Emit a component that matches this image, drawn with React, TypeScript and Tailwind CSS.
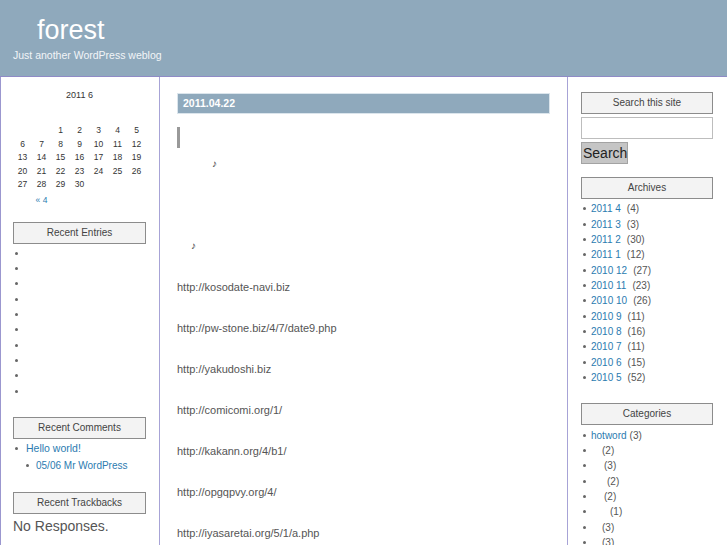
import type { ReactNode } from "react";

const archives: [string, number][] = [
  ["2011 4", 4],
  ["2011 3", 3],
  ["2011 2", 30],
  ["2011 1", 12],
  ["2010 12", 27],
  ["2010 11", 23],
  ["2010 10", 26],
  ["2010 9", 11],
  ["2010 8", 16],
  ["2010 7", 11],
  ["2010 6", 15],
  ["2010 5", 52],
];

// category names are blank in the shot, only the gap before the count is left
const categories: { name?: string; gap: string; count: number }[] = [
  { name: "hotword", gap: "w-[3px]", count: 3 },
  { gap: "w-[11px]", count: 2 },
  { gap: "w-[13px]", count: 3 },
  { gap: "w-[16px]", count: 2 },
  { gap: "w-[13px]", count: 2 },
  { gap: "w-[19px]", count: 1 },
  { gap: "w-[11px]", count: 3 },
  { gap: "w-[11px]", count: 3 },
];

const links = [
  "http://kosodate-navi.biz",
  "http://pw-stone.biz/4/7/date9.php",
  "http://yakudoshi.biz",
  "http://comicomi.org/1/",
  "http://kakann.org/4/b1/",
  "http://opgqpvy.org/4/",
  "http://iyasaretai.org/5/1/a.php",
];

const weeks: (number | null)[][] = [
  [null, null, 1, 2, 3, 4, 5],
  [6, 7, 8, 9, 10, 11, 12],
  [13, 14, 15, 16, 17, 18, 19],
  [20, 21, 22, 23, 24, 25, 26],
  [27, 28, 29, 30, null, null, null],
];

function WidgetTitle({ children, className = "" }: { children: ReactNode; className?: string }) {
  return (
    <div
      className={`h-[22px] w-[133px] border border-[#8c8c8c] bg-[#f3f3f3] text-center text-[10px] leading-[20px] text-[#444] ${className}`}
    >
      {children}
    </div>
  );
}

function Dot() {
  return <span className="h-[3px] w-[3px] shrink-0 rounded-full bg-[#666]" />;
}

export default function App() {
  return (
    <div className="min-h-[545px] bg-white font-['Liberation_Sans',Arial,sans-serif] text-[#555]">
      <header className="h-[77px] border-b border-[#8f8bc6] bg-[#8fa9bc] pt-[15px]">
        <h1 className="pl-[37px] text-[27px] leading-[30px] text-white">forest</h1>
        <p className="mt-[3px] pl-[13px] text-[10.5px] leading-[14px] text-[#f2f5f8]">
          Just another WordPress weblog
        </p>
      </header>

      <div className="flex min-h-[468px] border-l border-[#9b97cf]">
        {/* left sidebar */}
        <aside className="w-[159px] shrink-0 border-r border-[#a7a3d6] pl-[12px]">
          <div className="mt-[11px] w-[133px] text-center text-[9px] leading-[14px] text-[#333]">
            2011 6
          </div>
          <div className="h-[22px]" />
          <div className="w-[133px]">
            {weeks.map((week, i) => (
              <div key={i} className="grid grid-cols-7 text-center text-[8.5px] leading-[13.5px] text-[#333]">
                {week.map((d, j) => (
                  <span key={j}>{d ?? ""}</span>
                ))}
              </div>
            ))}
            <div className="mt-[2.5px] grid grid-cols-7 text-center text-[8.5px] leading-[13.5px]">
              <span />
              <span className="text-[#2b7bb0]">« 4</span>
            </div>
          </div>

          <WidgetTitle className="mt-[14px]">Recent Entries</WidgetTitle>
          <ul className="mt-[2px]">
            {Array.from({ length: 10 }).map((_, i) => (
              <li key={i} className="flex h-[15.33px] items-center pl-[2px]">
                <Dot />
              </li>
            ))}
          </ul>

          <WidgetTitle className="mt-[18px]">Recent Comments</WidgetTitle>
          <ul className="mt-[2.5px] text-[#2b7bb0]">
            <li className="flex h-[15px] items-center pl-[2px]">
              <Dot />
              <span className="ml-[8px] text-[10.5px]">Hello world!</span>
            </li>
            <li className="mt-[2px] flex h-[15px] items-center pl-[13px]">
              <Dot />
              <span className="ml-[7px] text-[10px]">05/06 Mr WordPress</span>
            </li>
          </ul>

          <WidgetTitle className="mt-[19px]">Recent Trackbacks</WidgetTitle>
          <p className="mt-[3px] text-[14px] leading-[18px] text-[#555]">No Responses.</p>
        </aside>

        {/* main column */}
        <main className="w-[408px] shrink-0 border-r border-[#a7a3d6] px-[17px]">
          <div className="mt-[16px] h-[21px] border border-[#dbe5ec] bg-[#8fa9bc] pl-[5px] text-[10.5px] font-bold leading-[19px] text-white">
            2011.04.22
          </div>
          <div className="mt-[13px] h-[21px] border-l-[3px] border-[#999]" />
          <p className="mt-[9px] pl-[35px] text-[10px] leading-[14px] text-[#333]">♪</p>
          <p className="mt-[68px] pl-[14px] text-[10px] leading-[14px] text-[#333]">♪</p>
          {links.map((href) => (
            <p key={href} className="mt-[27px] text-[11px] leading-[14px] text-[#555]">
              {href}
            </p>
          ))}
        </main>

        {/* right sidebar */}
        <aside className="flex-1 pl-[13px]">
          <WidgetTitle className="mt-[15px] !w-[132px]">Search this site</WidgetTitle>
          <input
            type="text"
            className="mt-[3px] block h-[22px] w-[132px] border border-[#bdbdbd] bg-white outline-none"
          />
          <button
            type="button"
            className="mt-[3px] block h-[22px] w-[47px] border border-[#a3a3a3] bg-[#c5c5c5] pl-[1px] text-left text-[14px] leading-[20px] text-[#222]"
          >
            Search
          </button>

          <WidgetTitle className="mt-[13px] !w-[132px]">Archives</WidgetTitle>
          <ul className="mt-[2.3px] text-[10px]">
            {archives.map(([label, count]) => (
              <li key={label} className="flex h-[15.33px] items-center pl-[2px]">
                <Dot />
                <span className="ml-[5px] text-[#2b7bb0]">{label}</span>
                <span className="ml-[6px] text-[#555]">({count})</span>
              </li>
            ))}
          </ul>

          <WidgetTitle className="mt-[18px] !w-[132px]">Categories</WidgetTitle>
          <ul className="mt-[2.3px] text-[10px]">
            {categories.map((c, i) => (
              <li key={i} className="flex h-[15.33px] items-center pl-[2px]">
                <Dot />
                <span className="ml-[5px] text-[#2b7bb0]">{c.name ?? ""}</span>
                <span className={`inline-block ${c.gap}`} />
                <span className="text-[#555]">({c.count})</span>
              </li>
            ))}
          </ul>
        </aside>
      </div>
    </div>
  );
}
